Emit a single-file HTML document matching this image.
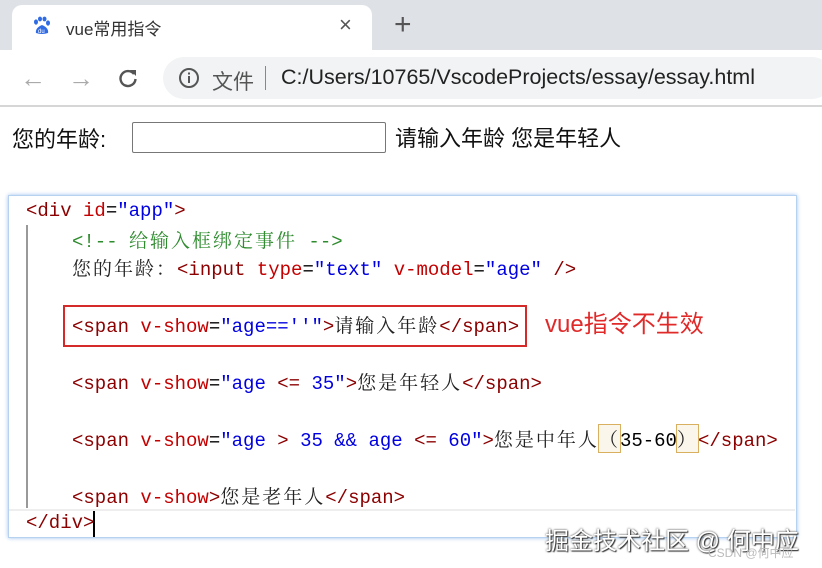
<!DOCTYPE html>
<html><head><meta charset="utf-8"><style>
body{margin:0;width:822px;height:568px;overflow:hidden;background:#fff;position:relative;font-family:"Liberation Sans","Noto Sans CJK SC",sans-serif}
.abs{position:absolute}
.tabbar{left:0;top:0;width:822px;height:50px;background:#dee1e6}
.tab{left:12px;top:5px;width:360px;height:46px;background:#fff;border-radius:10px 10px 0 0}
.tb{left:0;top:50px;width:822px;height:55px;background:#fff}
.omni{left:163px;top:57px;width:670px;height:42px;background:#f1f3f4;border-radius:21px}
.sep{left:0;top:105px;width:822px;height:2px;background:#d6d6d6}
.code{left:8px;top:195px;width:787px;height:341px;border:1px solid #b7d2f0;box-shadow:0 0 4px #9cc3ee;background:#fff}
.ln{position:absolute;font-family:"Liberation Mono","Noto Serif CJK SC",monospace;font-size:19px;white-space:pre;line-height:24px;color:#000}
.t{color:#8b0000}.a{color:#c40000}.v{color:#0000e0}.c{color:#2e8b2e}
.cj{font-family:"Noto Serif CJK SC",serif;color:#222;letter-spacing:2px}
</style></head><body>
<div class="abs tabbar"></div>
<div class="abs tab"></div>
<svg class="abs" style="left:32px;top:16px" width="20" height="20" viewBox="0 0 20 20"><g fill="#2f6be4"><ellipse cx="4" cy="6" rx="2" ry="2.6"/><ellipse cx="8" cy="3" rx="2" ry="2.4"/><ellipse cx="12.5" cy="3" rx="2" ry="2.4"/><ellipse cx="16" cy="7" rx="2" ry="2.6"/><path d="M4 17 Q3 12 10 9 Q17 12 16 17 Q10 19 4 17Z"/></g><text x="6" y="17" font-size="6" fill="#fff" font-family="Liberation Sans">du</text></svg>
<div class="abs" style="left:66px;top:15px;font-size:17px;color:#333">vue常用指令</div>
<div class="abs" style="left:339px;top:12px;font-size:22px;color:#555">×</div>
<div class="abs" style="left:394px;top:8px;font-size:30px;color:#555;font-weight:300">+</div>
<div class="abs tb"></div>
<div class="abs omni"></div>
<div class="abs" style="left:20px;top:63px;font-size:26px;color:#aaa">←</div>
<div class="abs" style="left:68px;top:63px;font-size:26px;color:#aaa">→</div>
<svg class="abs" style="left:117px;top:67px" width="22" height="22" viewBox="0 0 22 22"><path d="M17 7 A7.5 7.5 0 1 0 18.5 12" fill="none" stroke="#555" stroke-width="2.4"/><path d="M13 3 L19 3 L19 9Z" fill="#555"/></svg>
<svg class="abs" style="left:178px;top:67px" width="22" height="22" viewBox="0 0 22 22"><circle cx="11" cy="11" r="9" fill="none" stroke="#555" stroke-width="2"/><rect x="10" y="9" width="2" height="7" fill="#555"/><rect x="10" y="5.5" width="2" height="2" fill="#555"/></svg>
<div class="abs" style="left:212px;top:66px;font-size:21px;color:#555">文件</div>
<div class="abs" style="left:265px;top:66px;width:1px;height:24px;background:#888"></div>
<div class="abs" style="left:281px;top:65px;font-size:21.5px;color:#222">C:/Users/10765/VscodeProjects/essay/essay.html</div>
<div class="abs sep"></div>
<div class="abs" style="left:12px;top:122px;font-size:22px;color:#111">您的年龄:</div>
<div class="abs" style="left:132px;top:122px;width:252px;height:29px;border:1px solid #777;border-radius:2px"></div>
<div class="abs" style="left:395px;top:121px;font-size:22px;color:#111">请输入年龄 您是年轻人</div>
<div class="abs code"></div>
<div class="abs" style="left:26px;top:225px;width:2px;height:283px;background:#999"></div>
<div class="abs" style="left:9px;top:509px;width:786px;height:2px;background:#eee"></div>
<div class="ln" style="left:26px;top:199px"><span class="t">&lt;div</span> <span class="a">id</span>=<span class="v">"app"</span><span class="t">&gt;</span></div>
<div class="ln" style="left:72px;top:228px"><span class="c">&lt;!-- </span><span class="c cj" style="color:#2e8b2e">给输入框绑定事件</span><span class="c"> --&gt;</span></div>
<div class="ln" style="left:72px;top:256px"><span class="cj">您的年龄：</span><span class="t">&lt;input</span> <span class="a">type</span>=<span class="v">"text"</span> <span class="a">v-model</span>=<span class="v">"age"</span> <span class="t">/&gt;</span></div>
<div class="ln" style="left:72px;top:313px"><span class="t">&lt;span</span> <span class="a">v-show</span>=<span class="v">"age==''"</span><span class="t">&gt;</span><span class="cj">请输入年龄</span><span class="t">&lt;/span&gt;</span></div>
<div class="ln" style="left:72px;top:370px"><span class="t">&lt;span</span> <span class="a">v-show</span>=<span class="v">"age <span class="t">&lt;=</span> 35"</span><span class="t">&gt;</span><span class="cj">您是年轻人</span><span class="t">&lt;/span&gt;</span></div>
<div class="ln" style="left:72px;top:427px"><span class="t">&lt;span</span> <span class="a">v-show</span>=<span class="v">"age <span class="t">&gt;</span> 35 &amp;&amp; age <span class="t">&lt;=</span> 60"</span><span class="t">&gt;</span><span class="cj">您是中年人</span><span style="background:#fbf6ec;outline:1px solid #d8b060" class="cj">（</span>35-60<span style="background:#fbf6ec;outline:1px solid #d8b060" class="cj">）</span><span class="t">&lt;/span&gt;</span></div>
<div class="ln" style="left:72px;top:484px"><span class="t">&lt;span</span> <span class="a">v-show</span><span class="t">&gt;</span><span class="cj">您是老年人</span><span class="t">&lt;/span&gt;</span></div>
<div class="ln" style="left:26px;top:511px"><span class="t">&lt;/div&gt;</span></div>
<div class="abs" style="left:93px;top:511px;width:2px;height:26px;background:#000"></div>
<div class="abs" style="left:63px;top:305px;width:460px;height:38px;border:2px solid #d42a2a"></div>
<div class="abs" style="left:545px;top:304px;font-size:24px;color:#e02a2a">vue指令不生效</div>
<div class="abs" style="left:545px;top:521px;font-size:24px;color:#fff;text-shadow:0 0 2px #333,1px 1px 1px #333">掘金技术社区 @ 何中应</div>
<div class="abs" style="left:708px;top:544px;font-size:12px;color:#bbb">CSDN @何中应</div>
</body></html>
